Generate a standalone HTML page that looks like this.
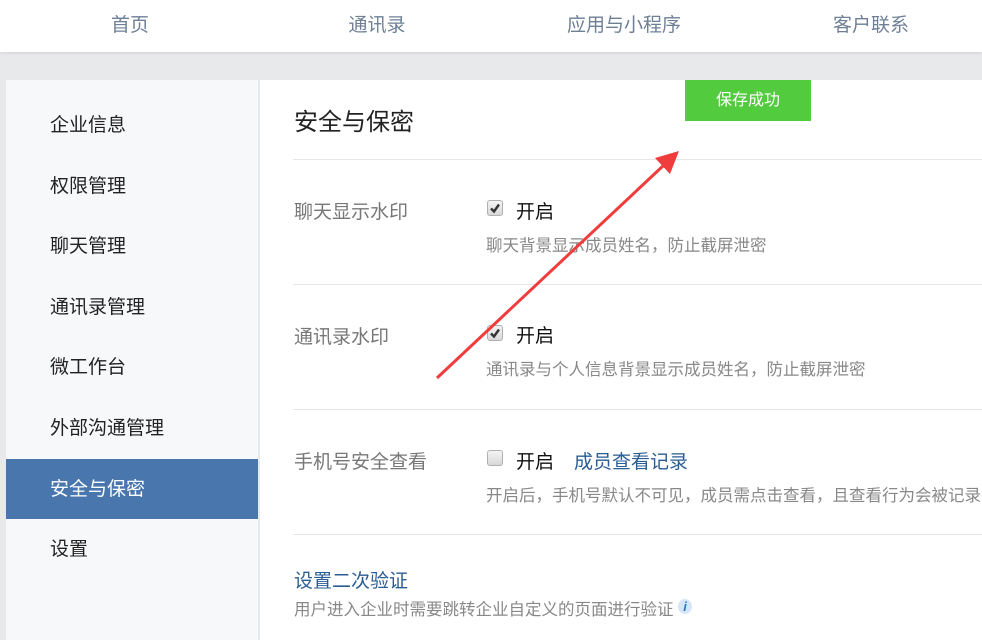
<!DOCTYPE html>
<html><head><meta charset="utf-8"><style>
*{margin:0;padding:0;box-sizing:border-box}
body{width:982px;height:632px;overflow:hidden;background:#e8e9eb;font-family:"Liberation Sans","Noto Sans CJK SC",sans-serif;position:relative}
.nav{position:absolute;left:0;top:0;width:982px;height:52px;background:#fff;box-shadow:0 1px 3px rgba(0,0,0,.1)}
.nav span{position:absolute;top:10px;font-size:19px;color:#6e7f96;transform:translateX(-50%);white-space:nowrap}
.side{position:absolute;left:6px;top:80px;width:253px;height:560px;background:#f7f8fa;border-right:1px solid #e6e8eb}
.side div{position:absolute;left:0;width:252px;height:60px;line-height:62px;padding-left:44px;font-size:19px;color:#222}
.side .act{background:#4876ad;color:#fff}
.main{position:absolute;left:260px;top:80px;width:722px;height:560px;background:#fff}
.abs{position:absolute;white-space:nowrap}
.lbl{font-size:19px;color:#777}
.on{font-size:19px;color:#111}
.desc{font-size:16.5px;color:#888}
.hr{position:absolute;left:293px;width:689px;height:1px;background:#e4e6e9}
.cb{position:absolute;width:16px;height:16px;border:1px solid #b0b0b0;border-radius:3px;background:linear-gradient(#f4f4f4,#d8d8d8)}
.ck{position:absolute;width:16px;height:16px}
.toast{position:absolute;left:685px;top:80px;width:126px;height:41px;background:#52cc3e;color:#fff;font-size:16px;text-align:center;line-height:41px}
</style></head><body>
<div class="nav">
<span style="left:130px">首页</span><span style="left:377px">通讯录</span><span style="left:624px">应用与小程序</span><span style="left:871px">客户联系</span>
</div>
<div class="side">
<div style="top:15px">企业信息</div>
<div style="top:76px">权限管理</div>
<div style="top:136px">聊天管理</div>
<div style="top:197px">通讯录管理</div>
<div style="top:257px">微工作台</div>
<div style="top:318px">外部沟通管理</div>
<div class="act" style="top:379px">安全与保密</div>
<div style="top:439px">设置</div>
</div>
<div class="main"></div>
<div class="abs" style="left:294px;top:102px;font-size:24px;color:#222">安全与保密</div>
<div class="hr" style="top:159px"></div>
<div class="abs lbl" style="left:294px;top:197px">聊天显示水印</div>
<div class="cb" style="left:487px;top:200px"></div>
<svg class="ck" style="left:487px;top:200px" viewBox="0 0 16 16"><path d="M4 8.5 L7 11.5 L12 4.5" fill="none" stroke="#333" stroke-width="2.4"/></svg>
<div class="abs on" style="left:516px;top:197px">开启</div>
<div class="abs desc" style="left:486px;top:232px">聊天背景显示成员姓名，防止截屏泄密</div>
<div class="hr" style="top:284px"></div>
<div class="abs lbl" style="left:294px;top:322px">通讯录水印</div>
<div class="cb" style="left:487px;top:325px"></div>
<svg class="ck" style="left:487px;top:325px" viewBox="0 0 16 16"><path d="M4 8.5 L7 11.5 L12 4.5" fill="none" stroke="#333" stroke-width="2.4"/></svg>
<div class="abs on" style="left:516px;top:321px">开启</div>
<div class="abs desc" style="left:486px;top:356px">通讯录与个人信息背景显示成员姓名，防止截屏泄密</div>
<div class="hr" style="top:409px"></div>
<div class="abs lbl" style="left:294px;top:447px">手机号安全查看</div>
<div class="cb" style="left:487px;top:450px"></div>
<div class="abs on" style="left:516px;top:447px">开启</div>
<div class="abs" style="left:574px;top:447px;font-size:19px;color:#2a5d94">成员查看记录</div>
<div class="abs desc" style="left:486px;top:482px">开启后，手机号默认不可见，成员需点击查看，且查看行为会被记录</div>
<div class="hr" style="top:534px"></div>
<div class="abs" style="left:294px;top:566px;font-size:19px;color:#2a5d94">设置二次验证</div>
<div class="abs desc" style="left:294px;top:596px">用户进入企业时需要跳转企业自定义的页面进行验证</div>
<div class="abs" style="left:678px;top:599px;width:14px;height:15px;border-radius:50%;background:#d6e6f7;color:#2a7ad0;font-size:13px;font-weight:bold;font-style:italic;text-align:center;line-height:15px">i</div>
<div class="toast">保存成功</div>
<svg class="abs" style="left:0;top:0" width="982" height="632">
<line x1="437" y1="378" x2="664" y2="165" stroke="#f03c3c" stroke-width="3"/>
<polygon points="679,151 670,174 655,158" fill="#f03c3c"/>
</svg>
</body></html>
